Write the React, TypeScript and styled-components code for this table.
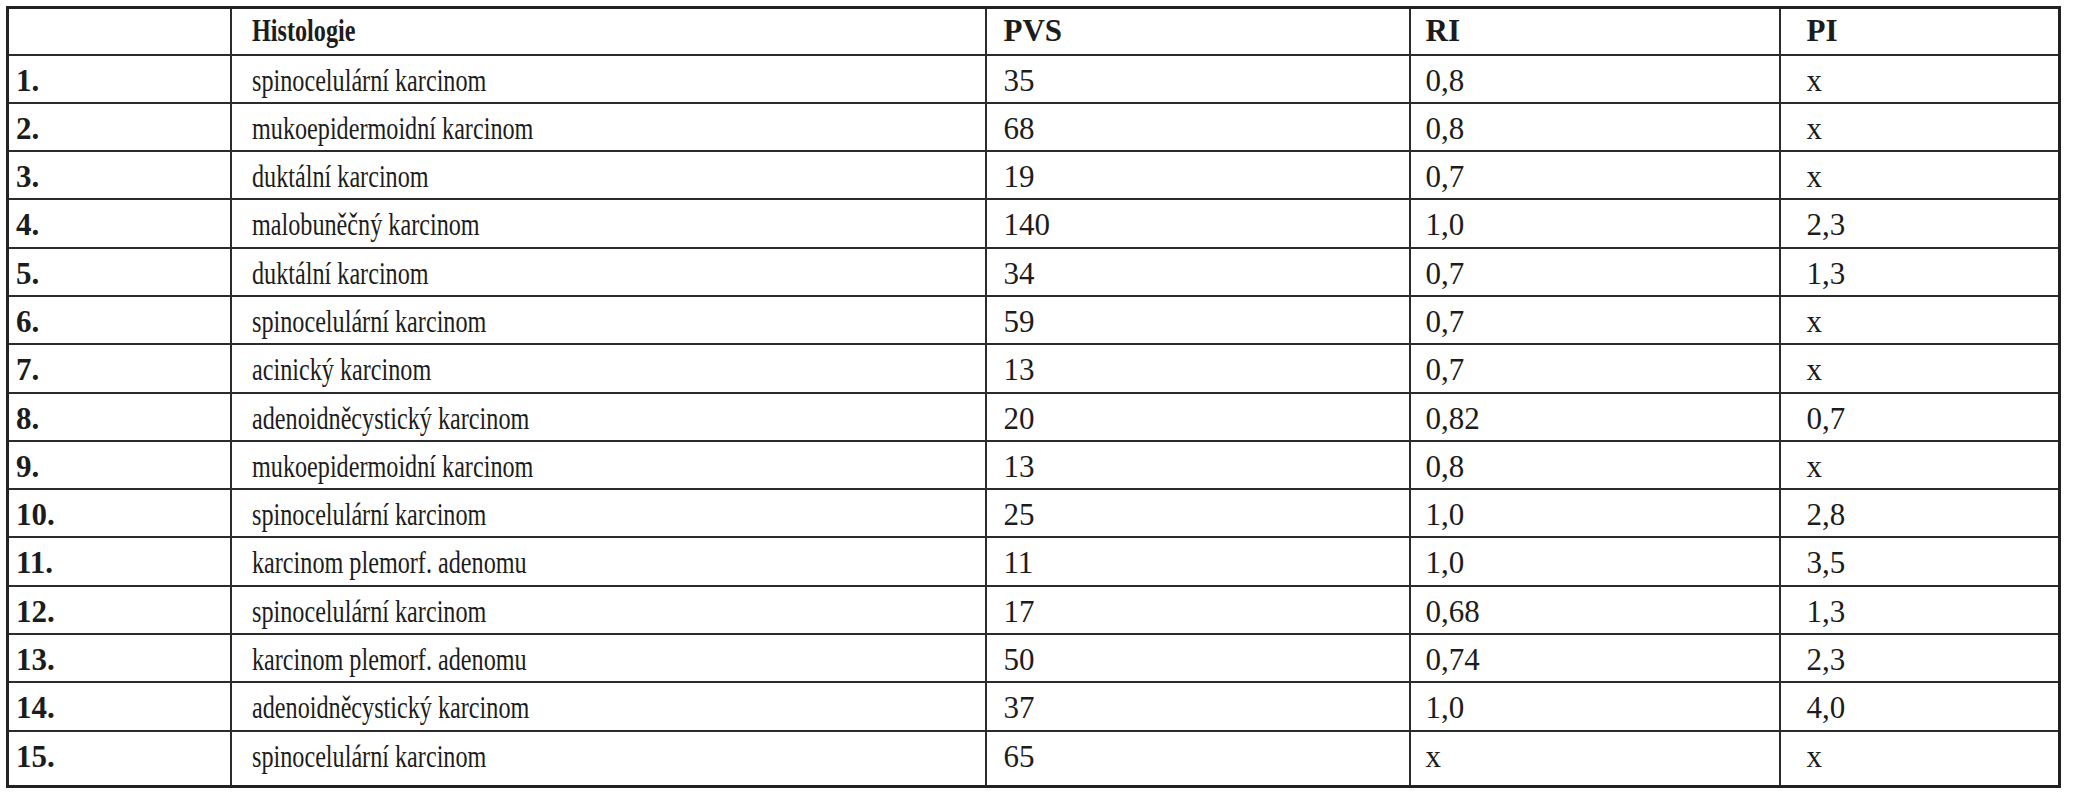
import styled, { createGlobalStyle } from 'styled-components';

type Row = {
	no: string;
	histology: string;
	pvs: string;
	ri: string;
	pi: string;
};

const rows: Row[] = [
	{ no: '1.', histology: 'spinocelulární karcinom', pvs: '35', ri: '0,8', pi: 'x' },
	{ no: '2.', histology: 'mukoepidermoidní karcinom', pvs: '68', ri: '0,8', pi: 'x' },
	{ no: '3.', histology: 'duktální karcinom', pvs: '19', ri: '0,7', pi: 'x' },
	{ no: '4.', histology: 'malobuněčný karcinom', pvs: '140', ri: '1,0', pi: '2,3' },
	{ no: '5.', histology: 'duktální karcinom', pvs: '34', ri: '0,7', pi: '1,3' },
	{ no: '6.', histology: 'spinocelulární karcinom', pvs: '59', ri: '0,7', pi: 'x' },
	{ no: '7.', histology: 'acinický karcinom', pvs: '13', ri: '0,7', pi: 'x' },
	{ no: '8.', histology: 'adenoidněcystický karcinom', pvs: '20', ri: '0,82', pi: '0,7' },
	{ no: '9.', histology: 'mukoepidermoidní karcinom', pvs: '13', ri: '0,8', pi: 'x' },
	{ no: '10.', histology: 'spinocelulární karcinom', pvs: '25', ri: '1,0', pi: '2,8' },
	{ no: '11.', histology: 'karcinom plemorf. adenomu', pvs: '11', ri: '1,0', pi: '3,5' },
	{ no: '12.', histology: 'spinocelulární karcinom', pvs: '17', ri: '0,68', pi: '1,3' },
	{ no: '13.', histology: 'karcinom plemorf. adenomu', pvs: '50', ri: '0,74', pi: '2,3' },
	{ no: '14.', histology: 'adenoidněcystický karcinom', pvs: '37', ri: '1,0', pi: '4,0' },
	{ no: '15.', histology: 'spinocelulární karcinom', pvs: '65', ri: 'x', pi: 'x' },
];

// column widths and left paddings, in px
const columns = [
	{ width: 223, pad: 7 },
	{ width: 755, pad: 20 },
	{ width: 424, pad: 17 },
	{ width: 370, pad: 15 },
	{ width: 280, pad: 26 },
];

const GlobalStyle = createGlobalStyle`
	html, body {
		margin: 0;
		padding: 0;
		background: #ffffff;
	}
	body {
		font-family: "Liberation Serif", "Times New Roman", serif;
		color: #1c1c1c;
	}
`;

const App = () => {
	return (
		<>
			<GlobalStyle />
			<Page>
				<Table>
					<colgroup>
						{columns.map((c, i) => (
							<col key={i} style={{ width: c.width }} />
						))}
					</colgroup>
					<thead>
						<HeadRow>
							<HeadCell $pad={columns[0].pad} />
							<HeadCell $pad={columns[1].pad}>
								<Condensed>Histologie</Condensed>
							</HeadCell>
							<HeadCell $pad={columns[2].pad}>PVS</HeadCell>
							<HeadCell $pad={columns[3].pad}>RI</HeadCell>
							<HeadCell $pad={columns[4].pad}>PI</HeadCell>
						</HeadRow>
					</thead>
					<tbody>
						{rows.map((row, i) => (
							<BodyRow key={row.no} $last={i === rows.length - 1}>
								<NumberCell $pad={columns[0].pad}>{row.no}</NumberCell>
								<Cell $pad={columns[1].pad}>
									<Condensed>{row.histology}</Condensed>
								</Cell>
								<Cell $pad={columns[2].pad}>{row.pvs}</Cell>
								<Cell $pad={columns[3].pad}>{row.ri}</Cell>
								<Cell $pad={columns[4].pad}>{row.pi}</Cell>
							</BodyRow>
						))}
					</tbody>
				</Table>
			</Page>
		</>
	);
};

const Page = styled.div`
	padding: 6px 0 0 6px;
`;

const Table = styled.table`
	border-collapse: collapse;
	table-layout: fixed;
	width: 2052px;
	border: 3px solid #222;
	font-size: 31px;
`;

const HeadRow = styled.tr`
	height: 47px;
`;

const BodyRow = styled.tr<{ $last: boolean }>`
	height: ${({ $last }) => ($last ? '56px' : '48.3px')};
`;

const Cell = styled.td<{ $pad: number }>`
	border: 2px solid #2b2b2b;
	padding: 9px 4px 0 ${({ $pad }) => $pad}px;
	vertical-align: top;
	line-height: 31px;
	white-space: nowrap;
	overflow: hidden;
	font-weight: 400;
`;

const NumberCell = styled(Cell)`
	font-weight: 700;
`;

const HeadCell = styled.th<{ $pad: number }>`
	border: 2px solid #2b2b2b;
	padding: 6px 4px 0 ${({ $pad }) => $pad}px;
	vertical-align: top;
	text-align: left;
	line-height: 31px;
	font-weight: 700;
	white-space: nowrap;
`;

/* the histology words in the source are set in a narrow face */
const Condensed = styled.span`
	display: inline-block;
	transform: scaleX(0.78);
	transform-origin: left center;
`;

export default App;
